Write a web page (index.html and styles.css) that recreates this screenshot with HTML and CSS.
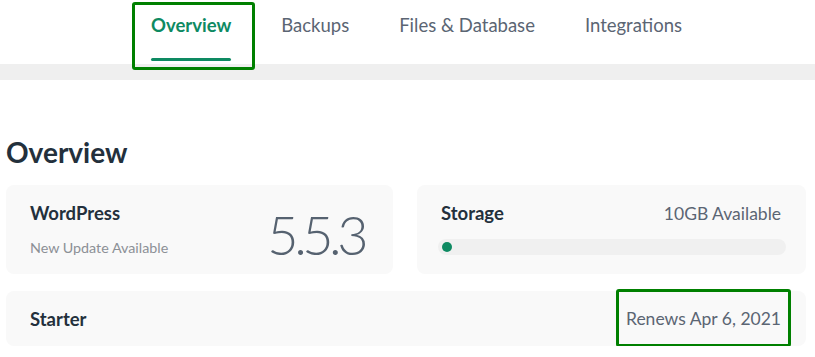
FILE: index.html
```html
<!DOCTYPE html>
<html lang="en">
<head>
<meta charset="UTF-8">
<meta name="viewport" content="width=device-width, initial-scale=1.0">
<title>Overview</title>
<link rel="stylesheet" href="styles.css">
</head>
<body>
<nav class="tabs">
<a class="tab active mark">Overview</a>
<a class="tab">Backups</a>
<a class="tab">Files &amp; Database</a>
<a class="tab">Integrations</a>
</nav>
<div class="band"></div>
<main class="content">
<h1>Overview</h1>
<div class="grid">
<div class="card wp">
<div>
<h3>WordPress</h3>
<p class="muted">New Update Available</p>
</div>
<div class="version">5.5.3</div>
</div>
<div class="card storage">
<div class="row">
<h3>Storage</h3>
<span class="info">10GB Available</span>
</div>
<div class="bar"><span class="fill"></span></div>
</div>
</div>
<div class="card plan">
<h3>Starter</h3>
<span class="info renew mark">Renews Apr 6, 2021</span>
</div>
</main>
</body>
</html>
```

FILE: styles.css
```css
* {box-sizing: border-box;margin: 0;padding: 0;}
body {font-family: "Lato", "Liberation Sans", sans-serif;color: #23303c;background: #fff;width: 815px;}
.tabs {display: flex;height: 64px;padding-left: 126px;}
.tab {position: relative;display: block;padding: 14px 25px 0;font-size: 18.5px;color: #5b6573;height: 64px;}
.tab.active {color: #0e8a62;font-weight: 700;}
.tab.active::before {content: "";position: absolute;left: 25px;right: 25px;bottom: 3px;height: 3px;border-radius: 2px;background: #0e8a62;}
.mark::after {content: "";position: absolute;border: 3px solid #008000;border-radius: 3px;}
.tab.mark::after {left: 6px;right: 1px;top: 2px;bottom: -6px;}
.band {height: 16px;background: #efefef;}
.content {padding: 55px 9px 0 6px;}
h1 {font-size: 28px;font-weight: 700;line-height: 34px;color: #23303c;}
.grid {display: grid;grid-template-columns: 387px 389px;gap: 24px;margin-top: 16px;}
.card {background: #f9f9f9;border-radius: 8px;}
h3 {font-size: 18.5px;font-weight: 700;color: #23303c;}
.wp {display: flex;justify-content: space-between;align-items: flex-start;height: 89px;padding: 17px 29px 0 24px;}
.muted {font-size: 14.3px;color: #8c9096;margin-top: 15px;}
.version {font-size: 54px;font-weight: 300;color: #566270;line-height: 1;margin-top: 6px;letter-spacing: -4.5px;}
.storage {height: 89px;padding: 17px 20px 0 21px;}
.row {display: flex;justify-content: space-between;align-items: baseline;padding: 0 5px 0 3px;}
.info {font-size: 17.5px;color: #5b6573;}
.bar {height: 16px;border-radius: 8px;background: #f0f0f0;margin-top: 15px;padding: 3px 4px;}
.fill {display: block;width: 10px;height: 10px;border-radius: 5px;background: #0e8a62;}
.plan {display: flex;justify-content: space-between;align-items: center;height: 55px;margin-top: 17px;padding: 0 25px 0 24px;}
.renew {position: relative;}
.renew.mark::after {left: -10px;right: -10px;top: -19px;bottom: -18px;}
```
